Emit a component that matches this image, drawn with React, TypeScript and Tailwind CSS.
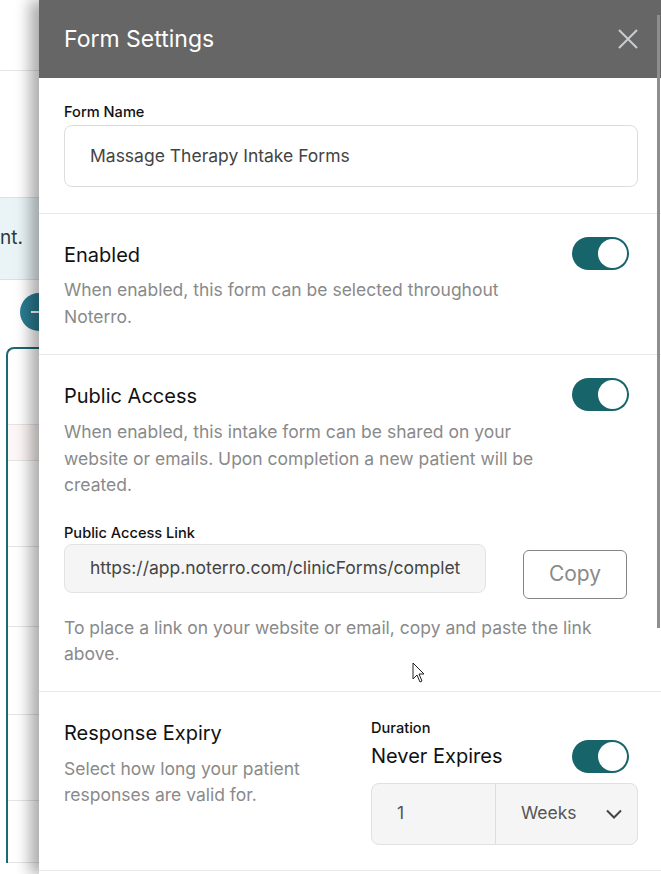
function Toggle() {
  return (
    <div className="flex h-[33px] w-[57px] shrink-0 items-center justify-end rounded-full bg-[#17646b] p-[2px]">
      <div className="h-[29px] w-[29px] rounded-full bg-white" />
    </div>
  );
}

function Background() {
  return (
    <div className="h-[874px] w-[661px] overflow-hidden bg-white">
      <div className="h-[71px] border-b border-[#e6e6e6]" />
      <div className="mt-[126px] flex h-[83px] items-center border-y border-[#cfe5ec] bg-[#eaf4f7] text-[19px] text-[#2b3a40]">
        nt.
      </div>
      <div className="relative h-[67px]">
        <div className="absolute left-[20px] top-[13px] flex h-[38px] w-[38px] items-center justify-center rounded-full bg-[#2a7d92]">
          <div className="h-[2px] w-[16px] bg-white" />
        </div>
      </div>
      <div className="ml-[6px] flex flex-col rounded-tl-[8px] border-l-2 border-t-2 border-[#1b6a72]">
        <div className="h-[76px] border-b border-[#e4e4e4]" />
        <div className="h-[36px] border-b border-[#e4e4e4] bg-[#fdf6f6]" />
        <div className="h-[86px] border-b border-[#e4e4e4]" />
        <div className="h-[80px] border-b border-[#e4e4e4]" />
        <div className="h-[88px] border-b border-[#e4e4e4]" />
        <div className="h-[86px] border-b border-[#e4e4e4]" />
        <div className="h-[62px] border-b border-[#e4e4e4]" />
      </div>
    </div>
  );
}

export default function App() {
  return (
    <div className="relative h-[874px] w-[661px] overflow-hidden font-['Inter',sans-serif]">
      <Background />

      <div className="absolute bottom-0 left-[39px] right-0 top-0 flex flex-col bg-white shadow-[-9px_0_14px_rgba(0,0,0,0.33)]">
        <div className="flex h-[78px] shrink-0 items-center justify-between bg-[#666666] pl-[25px] pr-[23px]">
          <h1 className="text-[23px] text-white">Form Settings</h1>
          <svg width="20" height="20" viewBox="0 0 20 20" className="text-[#c9cdd0]">
            <path d="M1 1 L19 19 M19 1 L1 19" stroke="currentColor" strokeWidth="2" />
          </svg>
        </div>

        <div className="flex flex-col">
          {/* form name */}
          <div className="border-b border-[#e6eaeb] pb-[26px] pl-[25px] pr-[23px] pt-[24px]">
            <label className="block text-[14.6px] font-medium leading-[20px] text-[#111]">Form Name</label>
            <div className="mt-[3px] flex h-[62px] items-center rounded-[8px] border border-[#dcdcdc] px-[25px] text-[17.5px] text-[#444]">
              Massage Therapy Intake Forms
            </div>
          </div>

          {/* enabled */}
          <div className="flex border-b border-[#e6eaeb] pb-[24px] pl-[25px] pr-[32px] pt-[23px]">
            <div className="flex-1">
              <h2 className="mt-[1px] text-[20px] leading-[34px] text-[#111]">Enabled</h2>
              <p className="mt-[4px] w-[485px] text-[17.5px] leading-[27px] text-[#8a8a8a]">
                When enabled, this form can be selected throughout Noterro.
              </p>
            </div>
            <Toggle />
          </div>

          {/* public access */}
          <div className="border-b border-[#e6eaeb] pb-[23px] pl-[25px] pr-[32px] pt-[23px]">
            <div className="flex">
              <div className="flex-1">
                <h2 className="mt-[1px] text-[20px] leading-[34px] text-[#111]">Public Access</h2>
                <p className="mt-[6px] w-[485px] text-[17.5px] leading-[26.5px] text-[#8a8a8a]">
                  When enabled, this intake form can be shared on your website or emails. Upon completion a new patient will be created.
                </p>
              </div>
              <Toggle />
            </div>
            <label className="mt-[24px] block text-[14.6px] font-medium leading-[20px] text-[#111]">Public Access Link</label>
            <div className="mt-[1px] flex items-start">
              <div className="flex h-[49px] w-[422px] items-center overflow-hidden whitespace-nowrap rounded-[8px] border border-[#e3e3e3] bg-[#f5f5f5] pl-[25px] text-[17.5px] text-[#444]">
                https://app.noterro.com/clinicForms/complet
              </div>
              <button className="ml-[37px] mt-[6px] flex h-[49px] w-[104px] items-center justify-center rounded-[6px] border border-[#858585] text-[21px] text-[#8a8a8a]">
                Copy
              </button>
            </div>
            <p className="mt-[16px] w-[540px] text-[17.5px] leading-[26.5px] text-[#8a8a8a]">
              To place a link on your website or email, copy and paste the link above.
            </p>
          </div>

          {/* response expiry */}
          <div className="flex border-b border-[#e6eaeb] pb-[25px] pl-[25px] pr-[23px] pt-[24px]">
            <div className="w-[307px]">
              <h2 className="text-[20px] leading-[34px] text-[#111]">Response Expiry</h2>
              <p className="mt-[6px] w-[270px] text-[17.5px] leading-[26.5px] text-[#8a8a8a]">
                Select how long your patient responses are valid for.
              </p>
            </div>
            <div className="flex-1 pt-[2px]">
              <div className="text-[14.6px] font-medium leading-[20px] text-[#111]">Duration</div>
              <div className="mt-[2px] flex items-center justify-between pr-[9px]">
                <span className="text-[20px] text-[#111]">Never Expires</span>
                <Toggle />
              </div>
              <div className="mt-[10px] flex h-[62px] rounded-[8px] border border-[#e0e0e0] bg-[#f5f5f5] text-[17.5px] text-[#555]">
                <div className="flex w-[124px] items-center border-r border-[#dedede] pl-[25px]">1</div>
                <div className="flex flex-1 items-center justify-between pl-[25px] pr-[15px]">
                  <span>Weeks</span>
                  <svg width="16" height="10" viewBox="0 0 16 10" className="text-[#444]">
                    <path d="M1 1.5 L8 8.5 L15 1.5" fill="none" stroke="currentColor" strokeWidth="2" />
                  </svg>
                </div>
              </div>
            </div>
          </div>
        </div>

        <div className="absolute right-[1px] top-[15px] h-[613px] w-[3px] bg-[#8e8e8e]" />
      </div>

      <svg className="absolute left-[412px] top-[662px]" width="14" height="22" viewBox="0 0 14 22">
        <path d="M1 1 L1 17 L5 13 L8 20 L10 19 L7 12 L12 12 Z" fill="white" stroke="#222" strokeWidth="1" strokeLinejoin="round" />
      </svg>
    </div>
  );
}
